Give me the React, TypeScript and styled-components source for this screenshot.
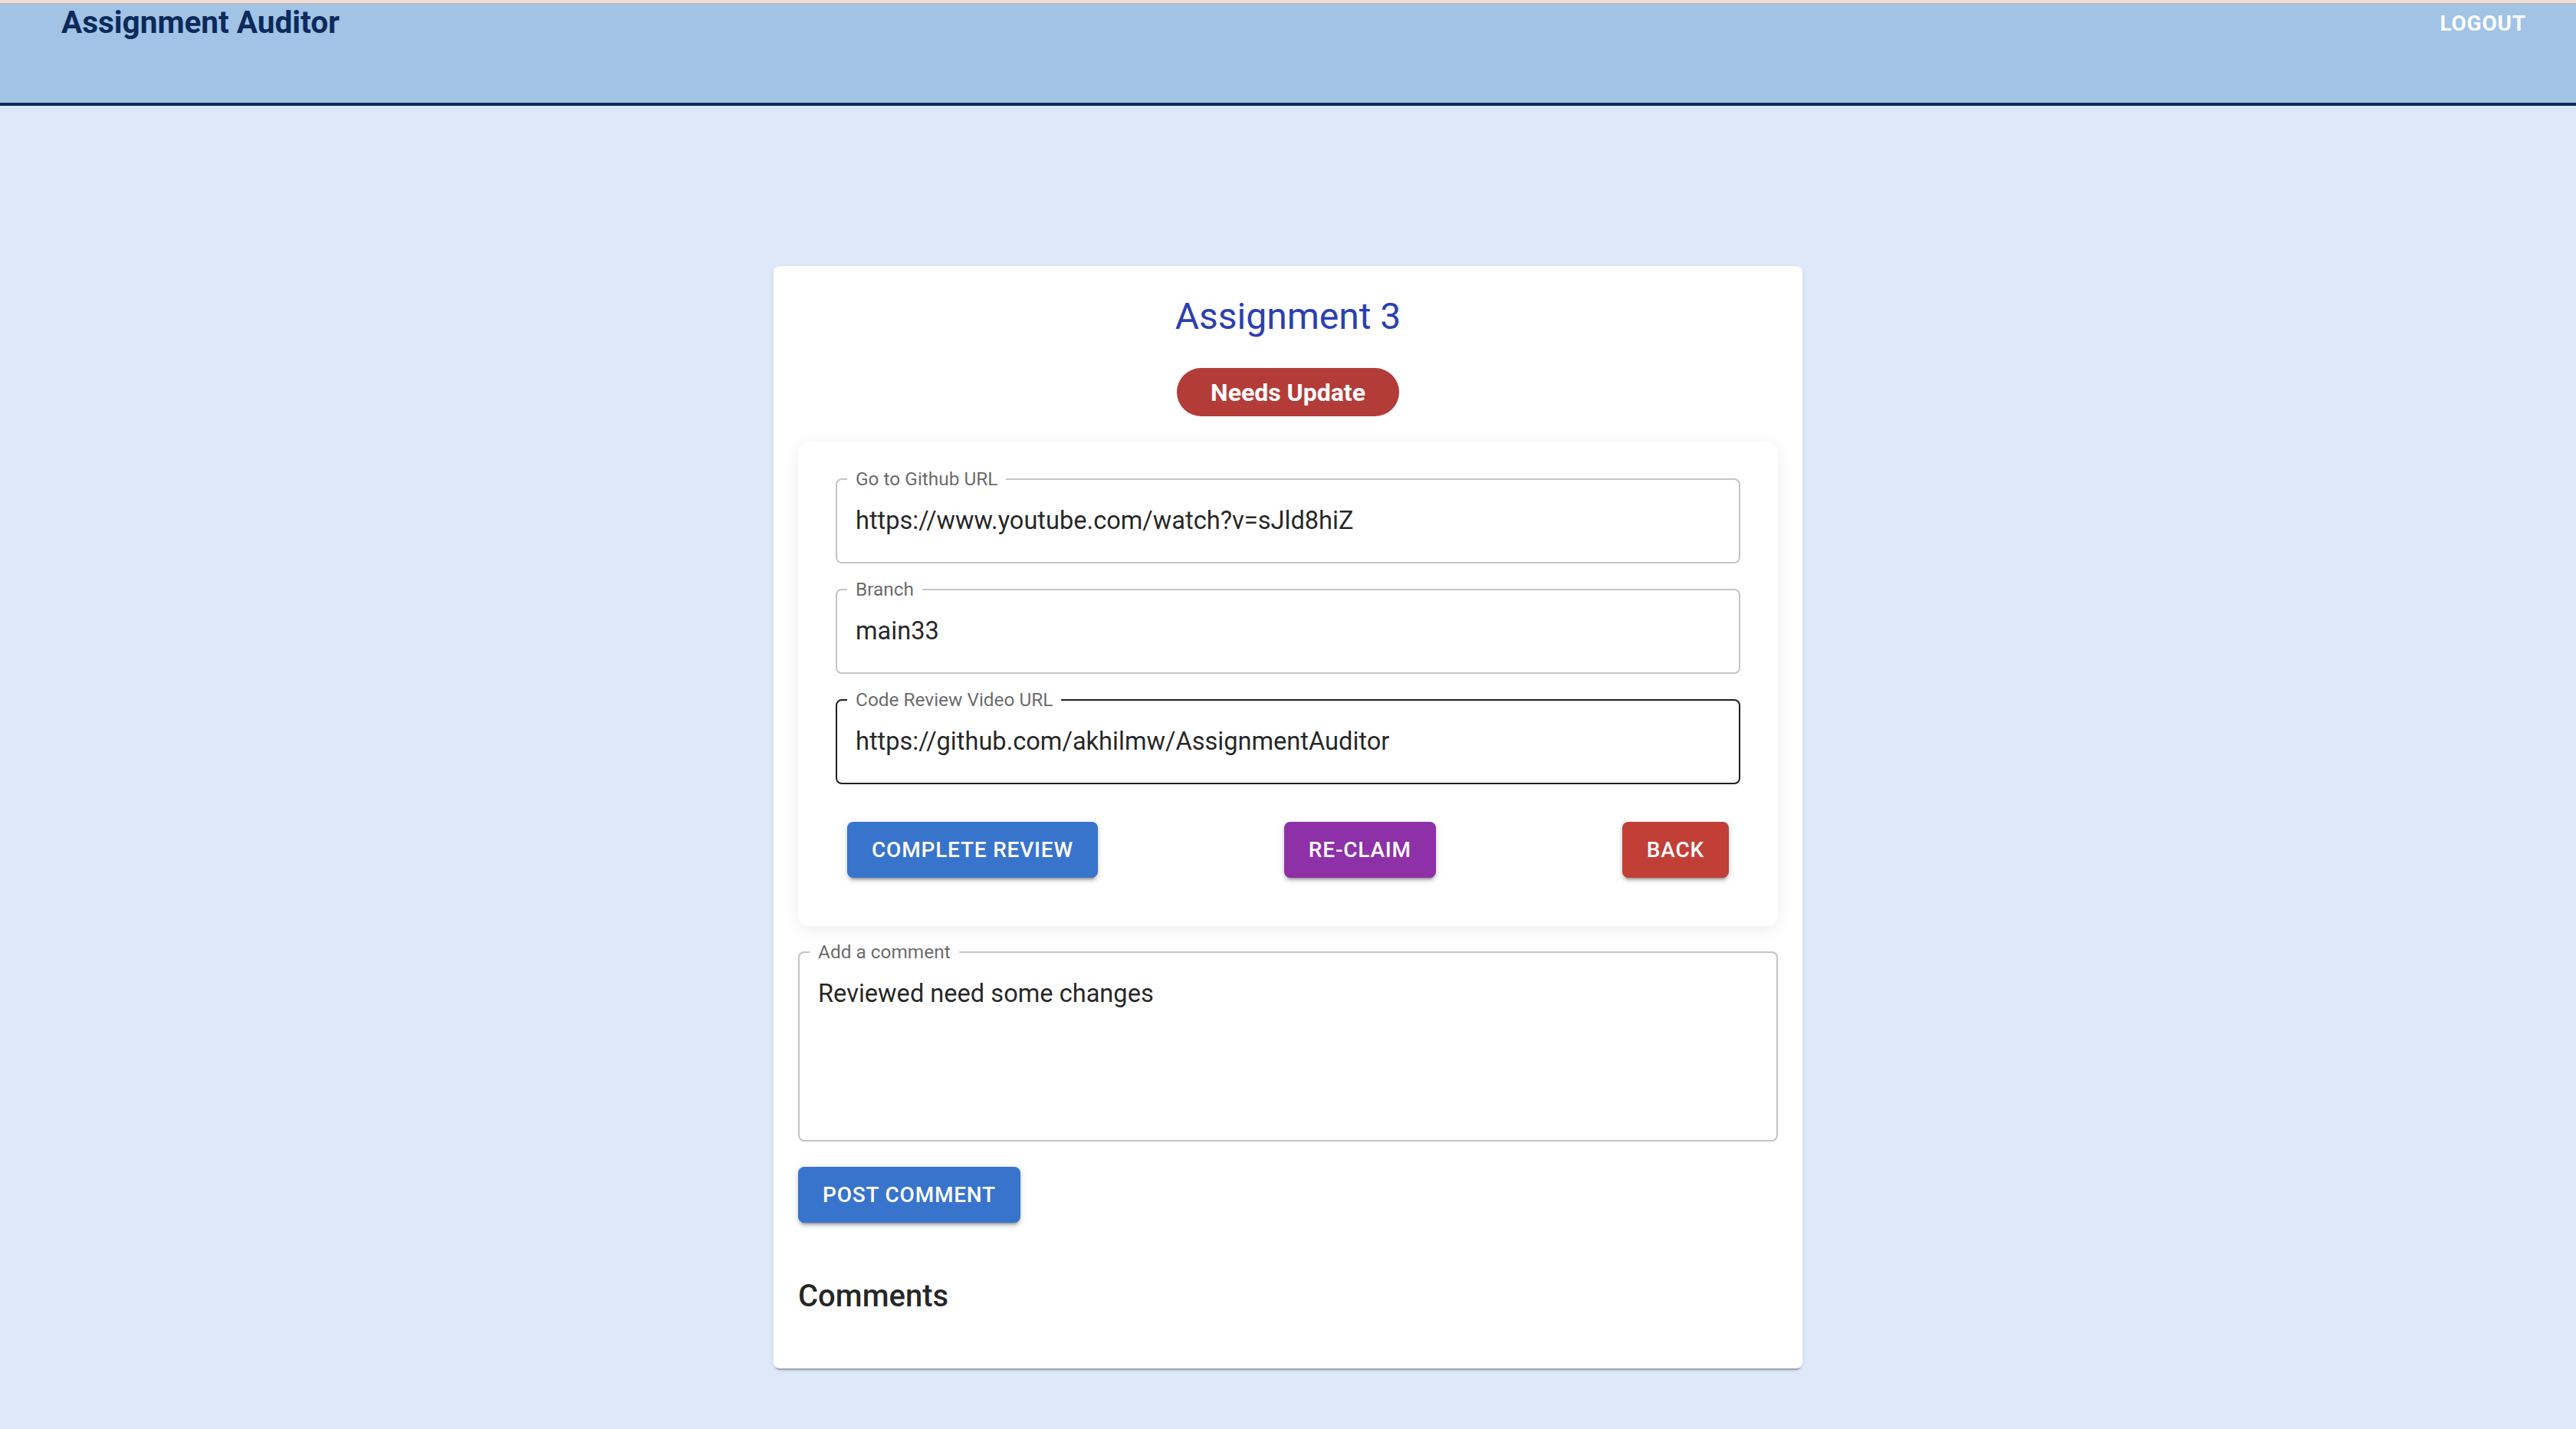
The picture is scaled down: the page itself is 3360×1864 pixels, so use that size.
import styled, { createGlobalStyle } from 'styled-components';

const GlobalStyle = createGlobalStyle`
  body {
    margin: 0;
    background: #dde8f9;
    font-family: Roboto, 'Liberation Sans', sans-serif;
  }
`;

const AppBar = styled.header`
  height: 138px;
  box-sizing: border-box;
  display: flex;
  justify-content: space-between;
  align-items: flex-start;
  padding: 0 65px 0 80px;
  background: #a0c3e6;
  border-top: 4px solid #efdcd4;
  border-bottom: 4px solid #0f2a5c;
  box-shadow: inset 0 2px 0 #b5bac0;
`;

const Brand = styled.div`
  padding-top: 4px;
  font-size: 40.5px;
  line-height: 42px;
  font-weight: 700;
  color: #0c2a5b;
`;

const LogoutButton = styled.button`
  margin-top: 13px;
  padding: 0;
  border: none;
  background: none;
  font-family: inherit;
  font-size: 28px;
  line-height: 28px;
  font-weight: 700;
  letter-spacing: 0.8px;
  color: #ffffff;
  text-transform: uppercase;
  cursor: pointer;
`;

const Main = styled.main`
  padding: 209px 0 80px;
`;

const Card = styled.section`
  width: 1342px;
  margin: 0 auto;
  box-sizing: border-box;
  padding: 34px 32px 32px;
  display: flex;
  flex-direction: column;
  background: #ffffff;
  border-radius: 8px;
  box-shadow: 0 4px 2px -2px rgba(0, 0, 0, 0.3), 0 2px 6px rgba(0, 0, 0, 0.08);
`;

const Title = styled.h1`
  margin: 0;
  align-self: center;
  font-size: 48px;
  line-height: 64px;
  font-weight: 400;
  color: #2c3fb0;
`;

const StatusBadge = styled.div`
  align-self: center;
  margin-top: 35px;
  height: 63px;
  padding: 0 44px;
  display: flex;
  align-items: center;
  border-radius: 32px;
  background: #b33c39;
  color: #ffffff;
  font-size: 32px;
  font-weight: 700;
`;

const FormPaper = styled.div`
  margin-top: 33px;
  padding: 37px 49px 63px;
  display: flex;
  flex-direction: column;
  gap: 22px;
  border-radius: 14px;
  background: #ffffff;
  box-shadow: 0 4px 20px rgba(0, 0, 0, 0.08);
`;

const Field = styled.fieldset<{ $active?: boolean }>`
  margin: 0;
  min-width: 0;
  padding: 0 13px;
  border: 2px solid ${(p) => (p.$active ? '#1f1f1f' : '#c4c4c4')};
  border-radius: 8px;
`;

const Label = styled.legend`
  padding: 0 11px;
  font-size: 24.4px;
  line-height: 24px;
  color: rgba(0, 0, 0, 0.6);
`;

const Input = styled.input`
  display: block;
  width: 100%;
  box-sizing: border-box;
  height: 84px;
  margin-bottom: 12px;
  padding: 0 11px;
  border: none;
  outline: none;
  background: transparent;
  font-family: inherit;
  font-size: 32.6px;
  color: rgba(0, 0, 0, 0.87);
`;

const ButtonRow = styled.div`
  margin-top: 27px;
  padding: 0 15px;
  display: flex;
  justify-content: space-between;
`;

const ActionButton = styled.button<{ $color: string }>`
  height: 73px;
  padding: 0 32px;
  border: none;
  border-radius: 8px;
  background: ${(p) => p.$color};
  color: #ffffff;
  font-family: inherit;
  font-size: 28px;
  font-weight: 500;
  letter-spacing: 0.8px;
  text-transform: uppercase;
  box-shadow: 0 6px 2px -4px rgba(0, 0, 0, 0.2), 0 4px 4px 0 rgba(0, 0, 0, 0.14),
    0 2px 10px 0 rgba(0, 0, 0, 0.12);
  cursor: pointer;
`;

const CommentField = styled(Field)`
  margin-top: 22px;
`;

const CommentInput = styled.textarea`
  display: block;
  width: 100%;
  box-sizing: border-box;
  margin: 19px 0 30px;
  padding: 0 11px;
  border: none;
  outline: none;
  resize: none;
  background: transparent;
  font-family: inherit;
  font-size: 32.6px;
  line-height: 46px;
  color: rgba(0, 0, 0, 0.87);
`;

const PostButton = styled(ActionButton)`
  align-self: flex-start;
  margin-top: 33px;
`;

const CommentsHeading = styled.h2`
  margin: 64px 0 30px;
  font-size: 40px;
  line-height: 64px;
  font-weight: 500;
  color: rgba(0, 0, 0, 0.87);
`;

const App = () => {
  return (
    <>
      <GlobalStyle />
      <AppBar>
        <Brand>Assignment Auditor</Brand>
        <LogoutButton type="button">Logout</LogoutButton>
      </AppBar>
      <Main>
        <Card>
          <Title>Assignment 3</Title>
          <StatusBadge>Needs Update</StatusBadge>

          {/* assignment details */}
          <FormPaper>
            <Field>
              <Label>Go to Github URL</Label>
              <Input defaultValue="https://www.youtube.com/watch?v=sJld8hiZ" />
            </Field>
            <Field>
              <Label>Branch</Label>
              <Input defaultValue="main33" />
            </Field>
            <Field $active>
              <Label>Code Review Video URL</Label>
              <Input defaultValue="https://github.com/akhilmw/AssignmentAuditor" />
            </Field>
            <ButtonRow>
              <ActionButton type="button" $color="#3874cc">
                Complete Review
              </ActionButton>
              <ActionButton type="button" $color="#8e30a8">
                Re-Claim
              </ActionButton>
              <ActionButton type="button" $color="#c23f38">
                Back
              </ActionButton>
            </ButtonRow>
          </FormPaper>

          {/* comments */}
          <CommentField>
            <Label>Add a comment</Label>
            <CommentInput rows={4} defaultValue="Reviewed need some changes" />
          </CommentField>
          <PostButton type="button" $color="#3874cc">
            Post Comment
          </PostButton>
          <CommentsHeading>Comments</CommentsHeading>
        </Card>
      </Main>
    </>
  );
};

export default App;
